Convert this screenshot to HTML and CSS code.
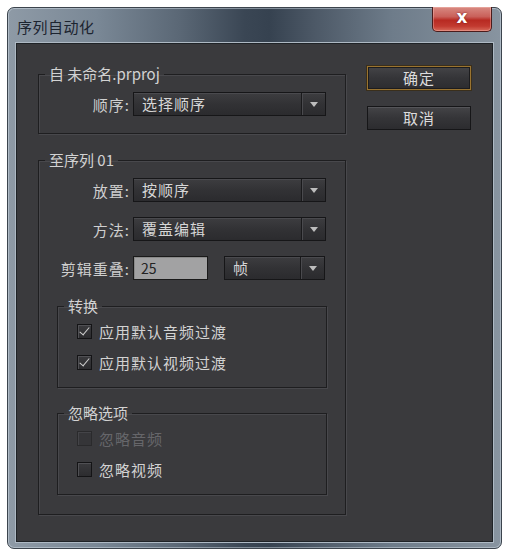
FILE: index.html
```html
<!DOCTYPE html>
<html lang="zh-CN">
<head>
<meta charset="utf-8">
<title>序列自动化</title>
<link rel="stylesheet" href="styles.css">
</head>
<body>
<div class="window">
  <div class="titlebar">
    <span class="title">序列自动化</span>
    <div class="close"><span>x</span></div>
  </div>
  <div class="content">
    <div class="left">
      <fieldset class="group">
        <legend>自 未命名.prproj</legend>
        <div class="body b1">
          <div class="row">
            <label class="lbl">顺序:</label>
            <div class="select w193"><span class="val">选择顺序</span><span class="arrow"></span></div>
          </div>
        </div>
      </fieldset>
      <fieldset class="group g2">
        <legend>至序列 01</legend>
        <div class="body b2">
          <div class="row">
            <label class="lbl">放置:</label>
            <div class="select w193"><span class="val">按顺序</span><span class="arrow"></span></div>
          </div>
          <div class="row">
            <label class="lbl">方法:</label>
            <div class="select w193"><span class="val">覆盖编辑</span><span class="arrow"></span></div>
          </div>
          <div class="row">
            <label class="lbl">剪辑重叠:</label>
            <div class="input">25</div>
            <div class="select w101"><span class="val">帧</span><span class="arrow"></span></div>
          </div>
          <fieldset class="group sub">
            <legend>转换</legend>
            <div class="body b3">
              <div class="check"><span class="box on"></span><span>应用默认音频过渡</span></div>
              <div class="check"><span class="box on"></span><span>应用默认视频过渡</span></div>
            </div>
          </fieldset>
          <fieldset class="group sub">
            <legend>忽略选项</legend>
            <div class="body b3">
              <div class="check disabled"><span class="box"></span><span>忽略音频</span></div>
              <div class="check"><span class="box"></span><span>忽略视频</span></div>
            </div>
          </fieldset>
        </div>
      </fieldset>
    </div>
    <div class="buttons">
      <div class="btn default">确定</div>
      <div class="btn">取消</div>
    </div>
  </div>
</div>
</body>
</html>
```

FILE: styles.css
```css
html, body {
  margin: 0;
  padding: 0;
  background: #ffffff;
}
body {
  font-family: "Noto Sans CJK SC", "Noto Sans", "DejaVu Sans", sans-serif;
  font-size: 15px;
  color: #cfcfcf;
}
.window {
  margin: 7px 0 0 7px;
  width: 495px;
  height: 542px;
  box-sizing: border-box;
  border: 1px solid #3c444d;
  border-radius: 7px;
  background: linear-gradient(to right, #8e9aa6 0%, #7a8896 18%, #5a6775 35%, #3a4654 48%, #364250 53%, #4c5866 62%, #6e7c8a 78%, #8894a0 100%);
  box-shadow: inset 0 0 0 1px rgba(220,230,240,0.45);
  display: flex;
  flex-direction: column;
  padding: 0 8px 6px 8px;
}
.titlebar {
  height: 35px;
  display: flex;
  align-items: flex-start;
  justify-content: space-between;
}
.title {
  margin-top: 10px;
  margin-left: 1px;
  font-size: 15px;
  color: #1c2430;
  letter-spacing: 0.5px;
  line-height: 18px;
}
.close {
  width: 60px;
  height: 25px;
  margin-top: -1px;
  margin-right: 1px;
  box-sizing: border-box;
  border: 1px solid #4a1c1c;
  border-top: none;
  border-radius: 0 0 5px 5px;
  background: linear-gradient(to bottom, #d88a82 0%, #c9605a 40%, #b82a22 55%, #c23a30 80%, #d86a5a 100%);
  box-shadow: inset 0 0 0 1px rgba(255,210,200,0.35);
  display: flex;
  align-items: center;
  justify-content: center;
}
.close span {
  color: #ffffff;
  font-family: "DejaVu Sans", sans-serif;
  font-weight: bold;
  font-size: 17px;
  line-height: 17px;
  margin-top: -3px;
  text-shadow: 0 0 2px rgba(80,0,0,0.8);
}
.content {
  flex: 1;
  display: flex;
  align-items: flex-start;
  background: #3a3a3d;
  border: 1px solid #1f2327;
  box-shadow: 0 0 0 1px #aeb9c4;
}
.left {
  width: 308px;
  margin-left: 21px;
  margin-top: 21px;
  display: flex;
  flex-direction: column;
}
.group {
  margin: 0;
  padding: 0;
  border: 1px solid #1e1e20;
  box-shadow: inset 1px 1px 0 #48484c, 1px 1px 0 #48484c;
  min-width: 0;
}
.group legend {
  margin-left: 6px;
  padding: 0 4px;
  line-height: 18px;
  height: 18px;
  color: #d2d2d2;
  font-size: 15px;
}
.g2 {
  margin-top: 17px;
}
.body {
  display: flex;
  flex-direction: column;
}
.b1 {
  padding: 9px 0 17px 0;
}
.b2 {
  padding: 9px 0 19px 0;
  gap: 15px;
}
.row {
  display: flex;
  align-items: center;
  height: 24px;
}
.lbl {
  width: 91px;
  text-align: right;
  padding-right: 3px;
  color: #cfcfcf;
  letter-spacing: 1px;
  white-space: nowrap;
}
.select {
  height: 24px;
  box-sizing: border-box;
  border: 1px solid #161618;
  background: linear-gradient(to bottom, #3d3d40 0%, #323235 50%, #2b2b2e 100%);
  box-shadow: inset 0 1px 0 #4a4a4e;
  display: flex;
  align-items: center;
}
.w193 { width: 193px; }
.w101 { width: 101px; margin-left: 16px; }
.val {
  flex: 1;
  padding-left: 8px;
  color: #d6d6d6;
  letter-spacing: 1px;
  line-height: 22px;
}
.arrow {
  width: 23px;
  height: 22px;
  border-left: 1px solid #1a1a1c;
  box-shadow: inset 1px 0 0 #4a4a4e;
  display: flex;
  align-items: center;
  justify-content: center;
}
.arrow::after {
  content: "";
  width: 0;
  height: 0;
  border-left: 4px solid transparent;
  border-right: 4px solid transparent;
  border-top: 5px solid #bdbdbd;
}
.input {
  width: 75px;
  height: 24px;
  box-sizing: border-box;
  border: 1px solid #1a1a1a;
  background: #a2a2a3;
  box-shadow: inset 1px 1px 0 #8a8a8a;
  color: #232323;
  padding-left: 7px;
  line-height: 22px;
  font-size: 14px;
}
.sub {
  margin: 0 18px;
}
.row + .sub {
  margin-top: 2px;
}
.sub + .sub {
  margin-top: 1px;
}
.b3 {
  padding: 6px 0 15px 19px;
  gap: 11px;
}
.check {
  display: flex;
  align-items: center;
  height: 20px;
  gap: 7px;
  color: #d2d2d2;
  letter-spacing: 1px;
}
.box {
  width: 15px;
  height: 15px;
  box-sizing: border-box;
  border: 1px solid #141416;
  background: linear-gradient(to bottom, #3a3a3d, #2c2c2f);
  box-shadow: inset 1px 1px 0 #505054;
  position: relative;
}
.box.on::after {
  content: "";
  position: absolute;
  left: 4px;
  top: 0px;
  width: 4px;
  height: 9px;
  border-right: 1.5px solid #cfcfcf;
  border-bottom: 1.5px solid #cfcfcf;
  transform: rotate(40deg);
}
.check.disabled {
  color: #66666a;
}
.check.disabled .box {
  border-color: #2a2a2c;
  background: #353538;
  box-shadow: inset 1px 1px 0 #444448;
}
.buttons {
  margin-left: 21px;
  margin-top: 22px;
  display: flex;
  flex-direction: column;
  gap: 16px;
}
.btn {
  width: 104px;
  height: 24px;
  box-sizing: border-box;
  border: 1px solid #161618;
  background: linear-gradient(to bottom, #444447 0%, #353538 50%, #2c2c2f 100%);
  box-shadow: inset 0 1px 0 #555559;
  text-align: center;
  line-height: 22px;
  color: #dcdcdc;
  letter-spacing: 1px;
}
.btn.default {
  border: 1px solid #9a7430;
  box-shadow: 0 0 0 1px #3a2f1c, inset 0 0 0 1px #1c1c1e;
}
```
